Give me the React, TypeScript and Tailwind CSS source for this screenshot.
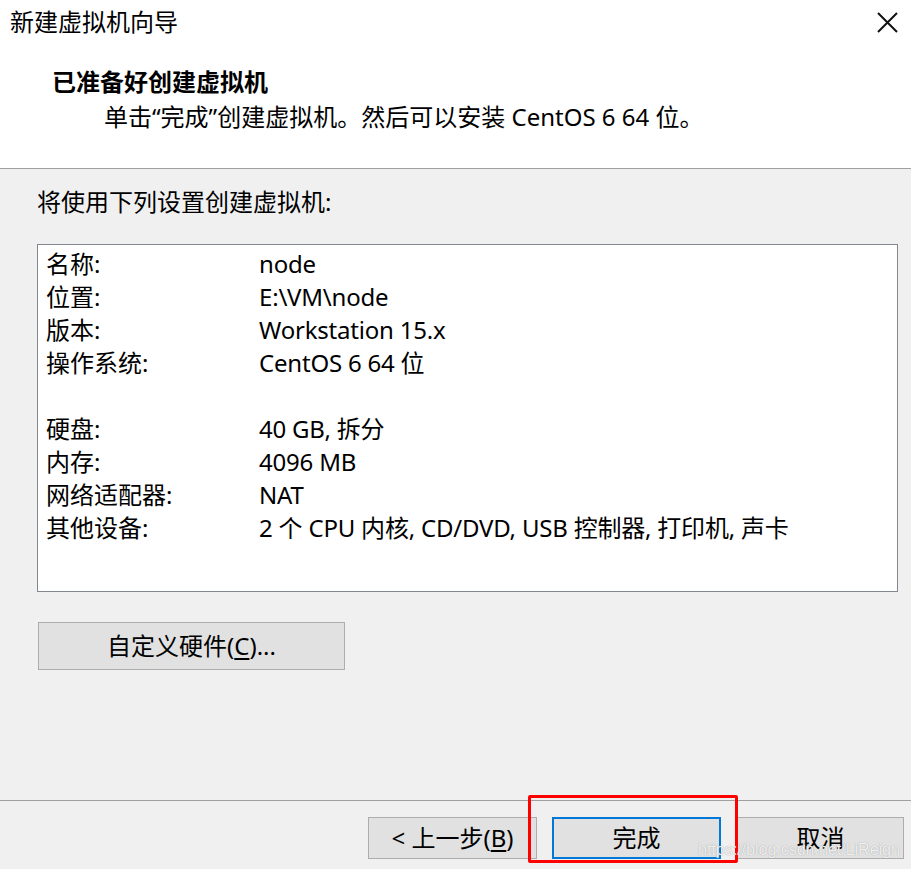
import React from 'react';

const font = { fontFamily: '"Noto Sans", "Noto Sans CJK SC", sans-serif' };

const rows: [string, string][] = [
  ['名称:', 'node'],
  ['位置:', 'E:\\VM\\node'],
  ['版本:', 'Workstation 15.x'],
  ['操作系统:', 'CentOS 6 64 位'],
  ['', ''],
  ['硬盘:', '40 GB, 拆分'],
  ['内存:', '4096 MB'],
  ['网络适配器:', 'NAT'],
  ['其他设备:', '2 个 CPU 内核, CD/DVD, USB 控制器, 打印机, 声卡'],
];

const CloseIcon = () => (
  <svg width="21" height="21" viewBox="0 0 21 21" fill="none">
    <path d="M1 1L20 20M20 1L1 20" stroke="#111" strokeWidth="2" />
  </svg>
);

export default function App() {
  return (
    <div
      className="relative w-[911px] h-[869px] flex flex-col bg-[#f0f0f0] text-black text-[24px] overflow-hidden"
      style={font}
    >
      {/* header */}
      <div className="h-[169px] shrink-0 bg-white border-b border-[#a0a0a0] flex flex-col">
        <div className="h-[44px] flex items-center justify-between pl-[10px] pr-[13px]">
          <span className="leading-[32px]">新建虚拟机向导</span>
          <CloseIcon />
        </div>
        <div className="mt-[22px] pl-[52px] leading-[32px] font-bold">已准备好创建虚拟机</div>
        <div className="mt-[3px] pl-[104px] leading-[32px]">
          单击“完成”创建虚拟机。然后可以安装 CentOS 6 64 位。
        </div>
      </div>

      {/* body */}
      <div className="flex-1 flex flex-col px-[37px] pt-[17px]">
        <div className="leading-[32px]">将使用下列设置创建虚拟机:</div>
        <div className="mt-[26px] w-[861px] h-[348px] bg-white border border-[#828790] pt-[2px] pl-[8px]">
          {rows.map(([k, v], i) => (
            <div key={i} className="flex h-[33px] items-center leading-[33px]">
              <span className="w-[213px] shrink-0">{k}</span>
              <span className="tracking-[-0.2px]">{v}</span>
            </div>
          ))}
        </div>
        <button className="mt-[30px] ml-[1px] w-[307px] h-[48px] bg-[#e1e1e1] border border-[#adadad] leading-[32px]">
          自定义硬件(<span className="underline underline-offset-[3px]">C</span>)...
        </button>
      </div>

      {/* footer */}
      <div className="h-[69px] shrink-0 border-t border-[#a0a0a0] flex justify-end items-start pt-[16px] pr-[7px]">
        <button className="w-[169px] h-[42px] bg-[#e1e1e1] border border-[#adadad] leading-[32px]">
          &lt; 上一步(<span className="underline underline-offset-[3px]">B</span>)
        </button>
        <button className="ml-[15px] w-[169px] h-[42px] bg-[#e1e1e1] border-2 border-[#0078d7] leading-[32px]">
          完成
        </button>
        <button className="ml-[16px] w-[167px] h-[42px] bg-[#e1e1e1] border border-[#adadad] leading-[32px]">
          取消
        </button>
      </div>

      {/* annotation overlay */}
      <div className="absolute left-[528px] top-[795px] w-[210px] h-[68px] border-[3px] border-[#ff0000] rounded-[2px] pointer-events-none" />
      <div
        className="absolute left-[698px] top-[840px] text-[16px] leading-[20px] whitespace-nowrap text-white/85 pointer-events-none [text-shadow:0_0_1px_#8a8a8a]"
        style={{ fontFamily: '"Liberation Sans", Arial, sans-serif' }}
      >
        https://blog.csdn.net/LiReign
      </div>
    </div>
  );
}
